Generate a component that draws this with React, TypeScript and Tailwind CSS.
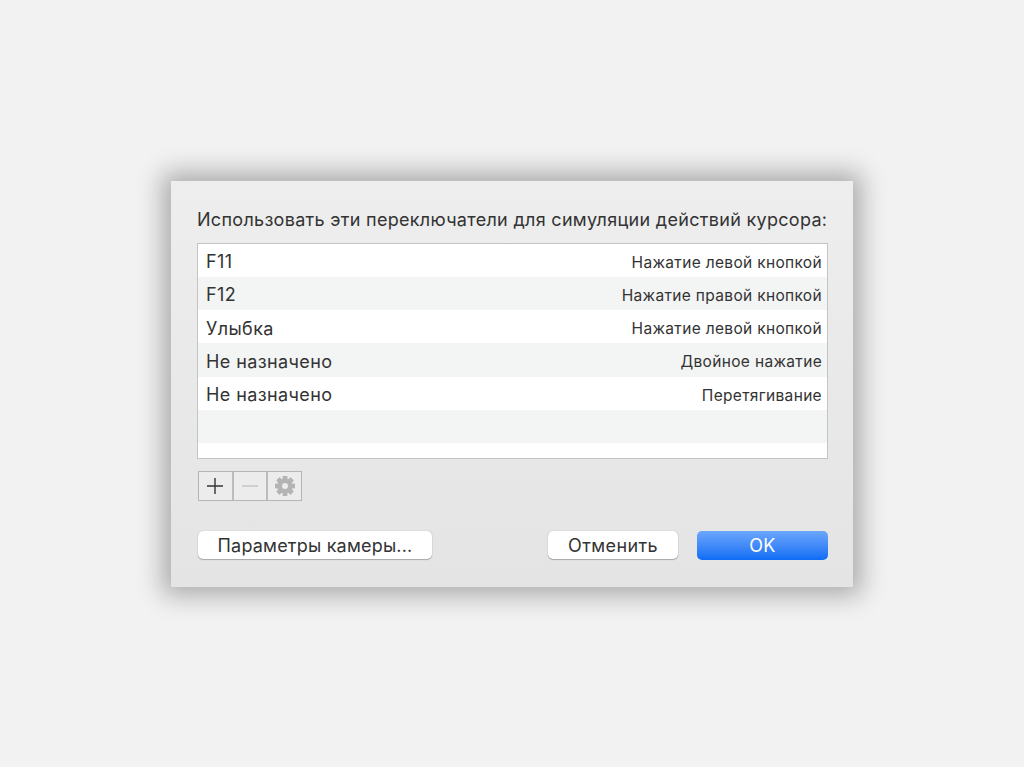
const rows = [
  { name: 'F11', action: 'Нажатие левой кнопкой' },
  { name: 'F12', action: 'Нажатие правой кнопкой' },
  { name: 'Улыбка', action: 'Нажатие левой кнопкой' },
  { name: 'Не назначено', action: 'Двойное нажатие' },
  { name: 'Не назначено', action: 'Перетягивание' },
  { name: '', action: '' },
]

function GearIcon() {
  const teeth = [0, 45, 90, 135, 180, 225, 270, 315]
  return (
    <svg width="22" height="22" viewBox="0 0 22 22">
      {teeth.map((a) => (
        <rect key={a} x="8.8" y="1" width="4.4" height="20" rx="0.6" fill="#b4b4b4" transform={`rotate(${a} 11 11)`} />
      ))}
      <circle cx="11" cy="11" r="7.6" fill="#b4b4b4" />
      <circle cx="11" cy="11" r="3" fill="#ececec" />
    </svg>
  )
}

export default function App() {
  return (
    <div className="h-[767px] bg-[#f2f2f2] flex items-center justify-center font-['Inter',sans-serif] text-[#333]">
      <div className="w-[682px] h-[406px] pl-[26px] pr-[25px] pt-[27px] flex flex-col bg-gradient-to-b from-[#eeeeee] to-[#e4e4e4] shadow-[0_0_24px_8px_rgba(0,0,0,0.3)]">
        <p className="text-[18px] leading-[24px] tracking-[0.3px] whitespace-nowrap">
          Использовать эти переключатели для симуляции действий курсора:
        </p>

        <div className="mt-[11px] h-[216px] border border-[#c4c4c4] bg-white">
          {rows.map((r, i) => (
            <div key={i} className={`h-[33.3px] pl-[8px] pr-[5px] flex items-center justify-between ${i % 2 === 1 ? 'bg-[#f3f4f4]' : 'bg-white'}`}>
              <span className="text-[18px] tracking-[0.4px] pt-[3px]">{r.name}</span>
              <span className="text-[15.5px] tracking-[0.33px] pt-[4px]">{r.action}</span>
            </div>
          ))}
        </div>

        <div className="mt-[12px] ml-[1px] w-[104px] h-[30px] flex border border-[#b5b5b5] bg-[#ececec]">
          <div className="flex-1 flex items-center justify-center border-r-2 border-[#bcbcbc]">
            <svg width="16" height="16" viewBox="0 0 16 16"><path d="M8 0v16M0 8h16" stroke="#333" strokeWidth="1.4" /></svg>
          </div>
          <div className="flex-1 flex items-center justify-center border-r-2 border-[#bcbcbc]">
            <svg width="16" height="16" viewBox="0 0 16 16"><path d="M0 8h16" stroke="#c4c4c4" strokeWidth="1.4" /></svg>
          </div>
          <div className="flex-1 flex items-center justify-center">
            <GearIcon />
          </div>
        </div>

        <div className="mt-[30px] flex items-center">
          <button className="ml-[1px] w-[234px] h-[28px] rounded-[5px] bg-white text-[18px] tracking-[0.2px] pt-[1px] shadow-[0_1px_1px_rgba(0,0,0,0.25),0_0_1px_rgba(0,0,0,0.3)]">
            Параметры камеры...
          </button>
          <button className="ml-auto w-[130px] h-[28px] rounded-[5px] bg-white text-[18px] tracking-[0.4px] pt-[1px] shadow-[0_1px_1px_rgba(0,0,0,0.25),0_0_1px_rgba(0,0,0,0.3)]">
            Отменить
          </button>
          <button className="ml-[19px] w-[131px] h-[29px] rounded-[5px] bg-gradient-to-b from-[#6ba6fb] to-[#0a6cf5] text-white text-[18px] tracking-[0.4px] pt-[1px]">
            OK
          </button>
        </div>
      </div>
    </div>
  )
}
